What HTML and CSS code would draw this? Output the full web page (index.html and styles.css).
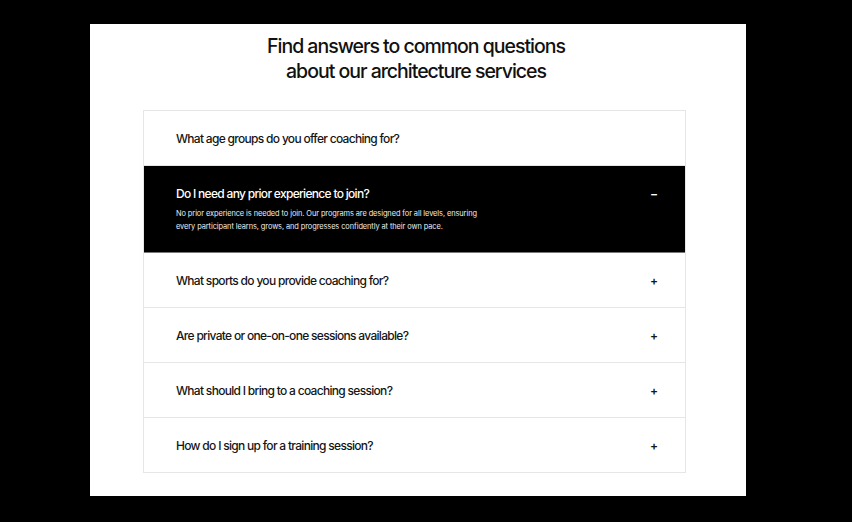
FILE: index.html
```html
<!DOCTYPE html>
<html lang="en">
<head>
    <meta charset="UTF-8">
    <meta name="viewport" content="width=device-width, initial-scale=1.0">
    <title>FAQ</title>
    <link rel="stylesheet" href="styles.css">
</head>
<body>
    <div class="card">
        <h1 class="title">Find answers to common questions<br>about our architecture services</h1>

        <div class="faq">
            <div class="faq-item">
                <div class="faq-question">
                    <span>What age groups do you offer coaching for?</span>
                </div>
            </div>
            <div class="faq-item open">
                <div class="faq-question">
                    <span>Do I need any prior experience to join?</span>
                    <span class="toggle">&minus;</span>
                </div>
                <p class="faq-answer">No prior experience is needed to join. Our programs are designed for all levels, ensuring every participant learns, grows, and progresses confidently at their own pace.</p>
            </div>
            <div class="faq-item">
                <div class="faq-question">
                    <span>What sports do you provide coaching for?</span>
                    <span class="toggle">+</span>
                </div>
            </div>
            <div class="faq-item">
                <div class="faq-question">
                    <span>Are private or one-on-one sessions available?</span>
                    <span class="toggle">+</span>
                </div>
            </div>
            <div class="faq-item">
                <div class="faq-question">
                    <span>What should I bring to a coaching session?</span>
                    <span class="toggle">+</span>
                </div>
            </div>
            <div class="faq-item">
                <div class="faq-question">
                    <span>How do I sign up for a training session?</span>
                    <span class="toggle">+</span>
                </div>
            </div>
        </div>
    </div>
</body>
</html>
```

FILE: styles.css
```css
* {
    margin: 0;
    padding: 0;
    box-sizing: border-box;
}

body {
    font-family: Inter, "Noto Sans", sans-serif;
    background: #000;
    padding: 24px 106px 26px 90px;
    min-height: 100vh;
}

.card {
    background: #fff;
    height: 472px;
    padding: 10px 60px 0 53px;
}

.title {
    font-size: 19.5px;
    font-weight: 500;
    line-height: 25px;
    letter-spacing: -0.052em;
    text-align: center;
    color: #111;
    margin-bottom: 26px;
    padding-left: 3px;
}

.faq {
    border: 1px solid #e6e6e6;
    border-bottom: none;
}

.faq-item {
    border-bottom: 1px solid #e6e6e6;
    padding: 0 27px 0 32px;
}

.faq-question {
    display: flex;
    align-items: center;
    justify-content: space-between;
    height: 54px;
    font-size: 12px;
    font-weight: 500;
    letter-spacing: -0.058em;
    color: #151515;
}

.toggle {
    font-size: 12px;
    font-weight: 600;
    width: 8px;
    text-align: center;
    letter-spacing: 0;
}

.faq-item.open {
    background: #000;
    border-bottom-color: #777;
    padding-bottom: 19px;
}

.faq-item.open .faq-question {
    color: #fff;
    height: 55px;
}

.faq-answer {
    color: #eee;
    font-size: 7.4px;
    line-height: 13px;
    letter-spacing: -0.01em;
    max-width: 308px;
    margin-top: -14px;
}
```
